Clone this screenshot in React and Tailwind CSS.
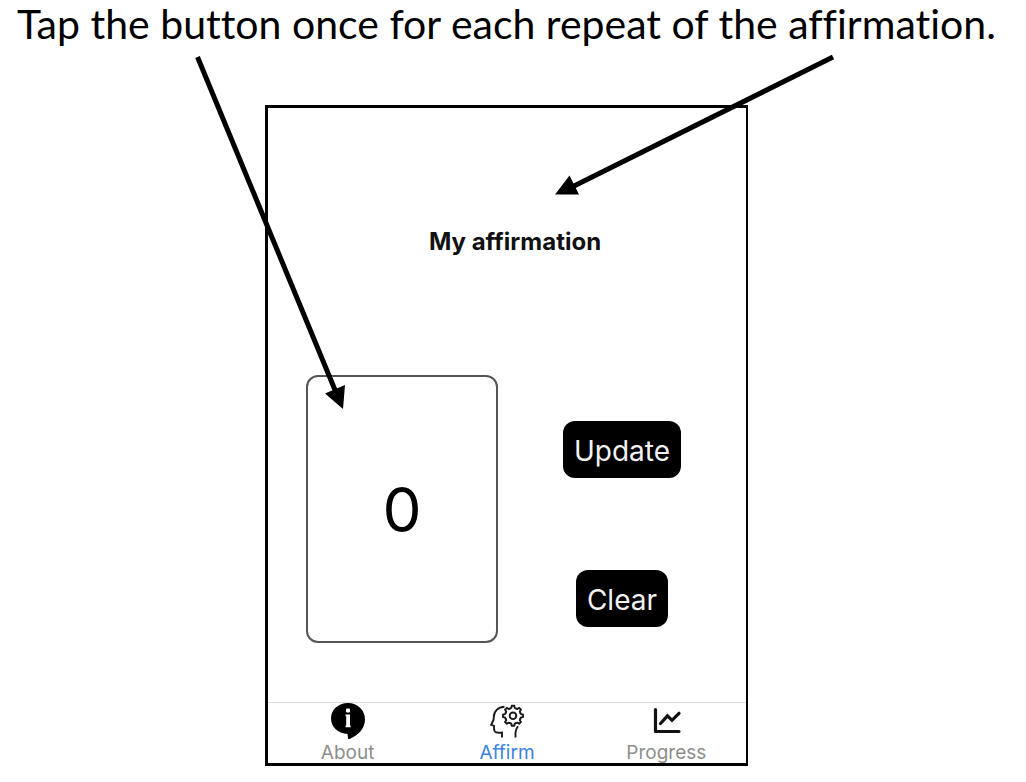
import { useState } from "react";

function AboutIcon() {
  return (
    <svg viewBox="0 0 36 36" className="h-9 w-9" aria-hidden="true">
      <path
        d="M18 0C8 0 1 7 1 15.500C1 24 8 30.500 17.500 31L18.200 36.500C27 33.500 35 26 35 16.500C35 7 27.500 0 18 0Z"
        fill="#000"
      />
      <rect x="16" y="5.500" width="4" height="4" rx="1" fill="#fff" />
      <path d="M15.500 11.500H20V22.500H20.700V24.200H15.500V22.500H16.200V13.200H15.500Z" fill="#fff" />
    </svg>
  );
}

const teeth = [0, 45, 90, 135, 180, 225, 270, 315];

function AffirmIcon() {
  return (
    <svg viewBox="0 0 36 36" className="h-9 w-9" fill="none" stroke="#1a1a1a" strokeWidth="1.900" aria-hidden="true">
      <path d="M15.500 3.700C9 4 4.800 8.500 4.800 14C4.800 16 4.600 17 4 18L2.200 21.800L5 22.800C4.900 25 4.800 27 5.800 28.500C7 30.200 9.500 29.800 13 29.500V34.500" />
      <path d="M26.600 34.500C26 30 26.600 26.500 29 23.300" />
      <circle cx="24" cy="12.800" r="3.300" />
      <g>
        {teeth.map((angle) => (
          <path
            key={angle}
            transform={`rotate(${angle} 24 12.800)`}
            d="M21 5.500L22.300 4.900L22.700 2.800H25.300L25.700 4.900L27 5.500"
            strokeLinejoin="round"
            strokeLinecap="round"
          />
        ))}
      </g>
    </svg>
  );
}

function ProgressIcon() {
  return (
    <svg
      viewBox="0 0 36 36"
      className="h-9 w-9"
      fill="none"
      stroke="#111"
      strokeWidth="3.200"
      strokeLinecap="round"
      aria-hidden="true"
    >
      <path d="M7.500 6.500V28.500H31" strokeLinejoin="round" />
      <path d="M12.500 20.500L19.500 12.800L24 17.300L31 10.300" />
    </svg>
  );
}

function Tab({ icon, label, active }) {
  return (
    <a
      href={`#${label.toLowerCase()}`}
      aria-current={active ? "page" : undefined}
      className={`flex flex-col items-center text-[19px] leading-5 ${active ? "text-[#3b82e0]" : "text-[#8e8e8e]"}`}
    >
      {icon}
      <span className="pt-1">{label}</span>
    </a>
  );
}

function Arrows() {
  return (
    <svg
      viewBox="265 105 483 661"
      className="pointer-events-none absolute inset-0 h-full w-full overflow-visible"
      aria-hidden="true"
    >
      <g stroke="#000" strokeWidth="5">
        <path d="M197.500 57L335 390" />
        <path d="M833 57L574 186" />
      </g>
      <path d="M343 409L325 393.500L345 385Z" />
      <path d="M555 194.500L569.500 175.500L579 194.500Z" />
    </svg>
  );
}

export default function App() {
  const [count, setCount] = useState(0);

  return (
    <main className="min-h-screen bg-white pr-[13px] pb-4 font-['Inter',sans-serif] text-black">
      <h1 className="px-2 pb-[57px] text-center font-['Lato',sans-serif] text-[41px] leading-[48px] [font-variant-ligatures:none]">
        Tap the button once for each repeat of the affirmation.
      </h1>
      <div className="relative mx-auto w-full max-w-[483px]">
        <section className="border-y-[3px] border-r-2 border-l-[3px] border-black">
          <h2 className="pt-[118px] pl-4 text-center text-2xl leading-8 font-bold text-[#111]">
            My affirmation
          </h2>
          <div className="flex items-center justify-between pt-[117px] pr-[65px] pb-[59px] pl-[38px]">
            <button
              type="button"
              aria-label="Count one repeat"
              onClick={() => setCount(count + 1)}
              className="h-[268px] w-[192px] rounded-xl border-2 border-[#555] text-[62px]"
            >
              {count}
            </button>
            <div className="flex flex-col items-center gap-[92px] pt-[30px]">
              <button type="button" className="rounded-xl bg-black px-[11px] pt-[10px] pb-[6px] text-[28px] leading-[41px] text-[#f2f2f2]">
                Update
              </button>
              <button
                type="button"
                onClick={() => setCount(0)}
                className="rounded-xl bg-black px-[11px] pt-[10px] pb-[6px] text-[28px] leading-[41px] text-[#f2f2f2]"
              >
                Clear
              </button>
            </div>
          </div>
          <nav className="grid grid-cols-3 border-t border-[#dcdcdc]">
            <Tab icon={<AboutIcon />} label="About" />
            <Tab icon={<AffirmIcon />} label="Affirm" active />
            <Tab icon={<ProgressIcon />} label="Progress" />
          </nav>
        </section>
        <Arrows />
      </div>
    </main>
  );
}
